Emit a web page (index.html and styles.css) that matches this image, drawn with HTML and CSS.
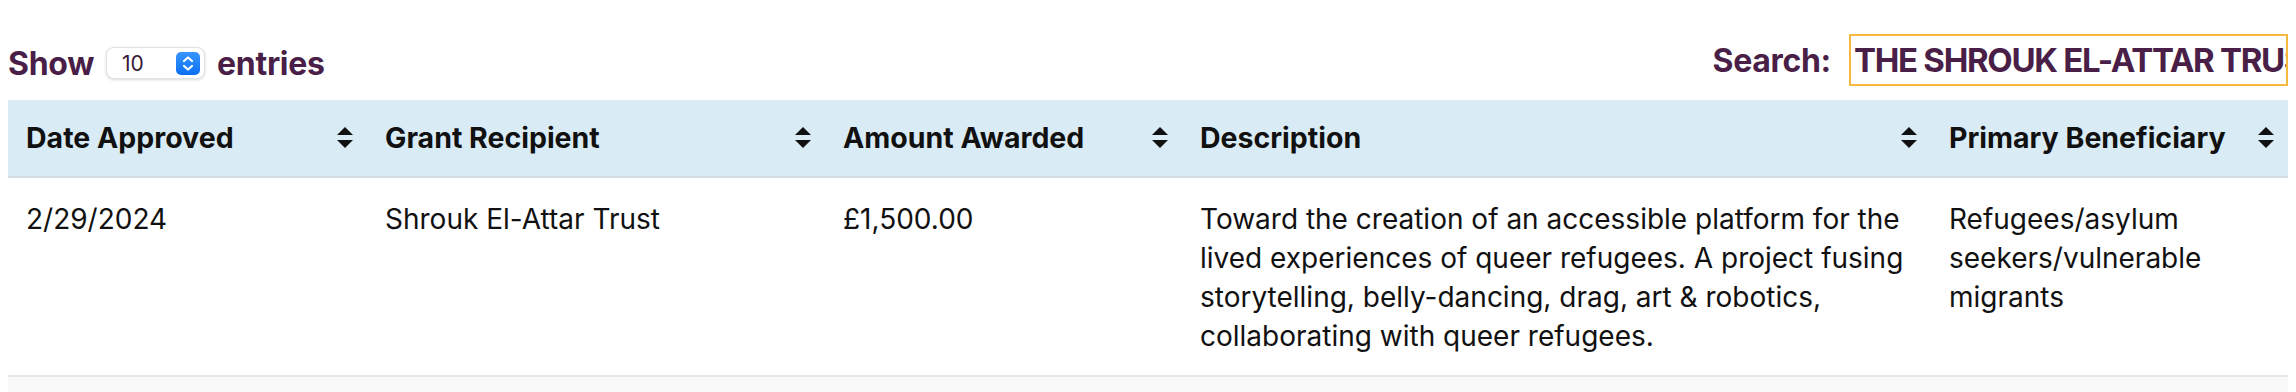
FILE: index.html
```html
<!DOCTYPE html>
<html lang="en">
<head>
<meta charset="utf-8">
<title>Grants</title>
<link rel="stylesheet" href="styles.css">
</head>
<body>
<div class="wrapper">
  <div class="controls">
    <label class="length">
      <span>Show</span>
      <span class="select">
        <span class="select-value">10</span>
        <span class="select-btn">
          <svg width="24" height="23" viewBox="0 0 24 23">
            <path d="M8 9 L12 5.5 L16 9" fill="none" stroke="#fff" stroke-width="2.2" stroke-linecap="round" stroke-linejoin="round"/>
            <path d="M8 14 L12 17.5 L16 14" fill="none" stroke="#fff" stroke-width="2.2" stroke-linecap="round" stroke-linejoin="round"/>
          </svg>
        </span>
      </span>
      <span>entries</span>
    </label>
    <label class="search">
      <span>Search:</span>
      <span class="search-box">THE SHROUK EL-ATTAR TRUST</span>
    </label>
  </div>
  <table class="grants">
    <colgroup>
      <col class="c1"><col class="c2"><col class="c3"><col class="c4"><col class="c5">
    </colgroup>
    <thead>
      <tr>
        <th><div class="th-in"><span>Date Approved</span><svg class="sort" width="16" height="21" viewBox="0 0 16 21"><polygon points="8,0 16,8 0,8"/><polygon points="0,13 16,13 8,21"/></svg></div></th>
        <th><div class="th-in"><span>Grant Recipient</span><svg class="sort" width="16" height="21" viewBox="0 0 16 21"><polygon points="8,0 16,8 0,8"/><polygon points="0,13 16,13 8,21"/></svg></div></th>
        <th><div class="th-in"><span>Amount Awarded</span><svg class="sort" width="16" height="21" viewBox="0 0 16 21"><polygon points="8,0 16,8 0,8"/><polygon points="0,13 16,13 8,21"/></svg></div></th>
        <th><div class="th-in"><span>Description</span><svg class="sort" width="16" height="21" viewBox="0 0 16 21"><polygon points="8,0 16,8 0,8"/><polygon points="0,13 16,13 8,21"/></svg></div></th>
        <th><div class="th-in"><span>Primary Beneficiary</span><svg class="sort" width="16" height="21" viewBox="0 0 16 21"><polygon points="8,0 16,8 0,8"/><polygon points="0,13 16,13 8,21"/></svg></div></th>
      </tr>
    </thead>
    <tbody>
      <tr class="odd">
        <td>2/29/2024</td>
        <td>Shrouk El-Attar Trust</td>
        <td>£1,500.00</td>
        <td>Toward the creation of an accessible platform for the lived experiences of queer refugees. A project fusing storytelling, belly-dancing, drag, art &amp; robotics, collaborating with queer refugees.</td>
        <td>Refugees/asylum seekers/vulnerable migrants</td>
      </tr>
      <tr class="even">
        <td class="empty"></td><td class="empty"></td><td class="empty"></td><td class="empty"></td><td class="empty"></td>
      </tr>
    </tbody>
  </table>
</div>
</body>
</html>
```

FILE: styles.css
```css
html {
  overflow: hidden;
}
body {
  margin: 8px;
  background: #ffffff;
  font-family: Inter, "Liberation Sans", sans-serif;
  color: #111111;
}
.controls {
  display: flex;
  justify-content: space-between;
  align-items: center;
  padding: 26px 0 14px 0;
}
.length,
.search {
  display: flex;
  align-items: center;
  font-size: 32px;
  font-weight: 700;
  color: #4a1f47;
  letter-spacing: -0.3px;
}
.length {
  gap: 12px;
  padding-top: 6px;
}
.select {
  display: flex;
  align-items: center;
  justify-content: space-between;
  width: 99px;
  height: 32px;
  box-sizing: border-box;
  padding: 0 4px 0 15px;
  background: #ffffff;
  border: 1px solid #e2e2e2;
  border-radius: 8px;
  box-shadow: 0 1px 3px rgba(0, 0, 0, 0.15);
}
.select-value {
  font-size: 21px;
  font-weight: 400;
  color: #3a1a38;
  letter-spacing: 0;
}
.select-btn {
  display: flex;
  width: 24px;
  height: 23px;
  border-radius: 5px;
  background: linear-gradient(#3a95ff, #0a6ff2);
}
.search {
  gap: 18px;
}
.search-box {
  display: block;
  width: 439px;
  height: 52px;
  box-sizing: border-box;
  border: 2px solid #f6b940;
  padding: 0 0 0 3px;
  line-height: 48px;
  white-space: nowrap;
  overflow: hidden;
  font-size: 33px;
  letter-spacing: -1.3px;
}
.grants {
  width: 2280px;
  border-collapse: collapse;
  table-layout: fixed;
}
.c1 { width: 359px; }
.c2 { width: 458px; }
.c3 { width: 357px; }
.c4 { width: 749px; }
.c5 { width: 357px; }
.grants th {
  background: #d9ecf6;
  border-bottom: 2px solid #d4dcdf;
  padding: 18px 14px 19px 18px;
  text-align: left;
  font-size: 28.5px;
  font-weight: 700;
  line-height: 39px;
  letter-spacing: 0;
  color: #111111;
}
.th-in {
  display: flex;
  justify-content: space-between;
  align-items: center;
}
.sort {
  fill: #111111;
  flex: none;
}
.grants td {
  padding: 22px 18px 19px 18px;
  vertical-align: top;
  font-size: 28px;
  line-height: 39px;
  letter-spacing: 0;
  color: #111111;
}
.grants tr.odd td {
  border-bottom: 2px solid #e6e6e6;
}
.grants tr.even td {
  background: #f9f9f9;
  height: 40px;
}
```
